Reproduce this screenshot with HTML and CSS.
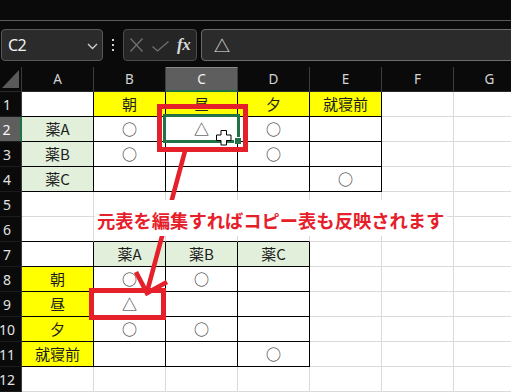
FILE: index.html
```html
<!DOCTYPE html>
<html lang="ja">
<head>
<meta charset="utf-8">
<link rel="stylesheet" href="styles.css">
</head>
<body>
<div class="app">
  <div class="topstrip"></div>
  <div class="fbar">
    <div class="namebox">
      <span class="ref">C2</span>
      <svg class="chev" width="11" height="7" viewBox="0 0 11 7"><path d="M1 1 L5.5 5.5 L10 1" fill="none" stroke="#d0d0d0" stroke-width="1.3"/></svg>
    </div>
    <div class="vdots"><i></i><i></i><i></i></div>
    <div class="fbtns">
      <svg class="ic-x" width="13" height="14" viewBox="0 0 13 14"><path d="M0.5 0.5 L12.5 13.5 M12.5 0.5 L0.5 13.5" stroke="#707070" stroke-width="1.3" fill="none"/></svg>
      <svg class="ic-ok" width="17" height="11" viewBox="0 0 17 11"><path d="M0.5 5.5 L5.5 10 L16.5 0.5" stroke="#707070" stroke-width="1.3" fill="none"/></svg>
      <span class="fx">fx</span>
    </div>
    <div class="finput"><span>△</span></div>
  </div>

  <div class="sheet">
    <div class="corner"><span class="tri"></span></div>
    <div class="ch">A</div><div class="ch">B</div><div class="ch sel">C</div><div class="ch">D</div><div class="ch">E</div><div class="ch">F</div><div class="ch">G</div>

    <div class="rh">1</div>
    <div class="c b"></div><div class="c b y">朝</div><div class="c b y">昼</div><div class="c b y">夕</div><div class="c b y">就寝前</div><div class="c"></div><div class="c"></div>

    <div class="rh sel">2</div>
    <div class="c b g">薬A</div><div class="c b sym">○</div><div class="c b sym">△</div><div class="c b sym">○</div><div class="c b"></div><div class="c"></div><div class="c"></div>

    <div class="rh">3</div>
    <div class="c b g">薬B</div><div class="c b sym">○</div><div class="c b"></div><div class="c b sym">○</div><div class="c b"></div><div class="c"></div><div class="c"></div>

    <div class="rh">4</div>
    <div class="c b g">薬C</div><div class="c b"></div><div class="c b"></div><div class="c b"></div><div class="c b sym">○</div><div class="c"></div><div class="c"></div>

    <div class="rh">5</div>
    <div class="c"></div><div class="c"></div><div class="c"></div><div class="c"></div><div class="c"></div><div class="c"></div><div class="c"></div>

    <div class="rh">6</div>
    <div class="c bb"></div><div class="c bb"></div><div class="c bb"></div><div class="c bb"></div><div class="c"></div><div class="c"></div><div class="c"></div>

    <div class="rh">7</div>
    <div class="c b"></div><div class="c b g">薬A</div><div class="c b g">薬B</div><div class="c b g">薬C</div><div class="c"></div><div class="c"></div><div class="c"></div>

    <div class="rh">8</div>
    <div class="c b y">朝</div><div class="c b sym">○</div><div class="c b sym">○</div><div class="c b"></div><div class="c"></div><div class="c"></div><div class="c"></div>

    <div class="rh">9</div>
    <div class="c b y">昼</div><div class="c b sym">△</div><div class="c b"></div><div class="c b"></div><div class="c"></div><div class="c"></div><div class="c"></div>

    <div class="rh">10</div>
    <div class="c b y">夕</div><div class="c b sym">○</div><div class="c b sym">○</div><div class="c b"></div><div class="c"></div><div class="c"></div><div class="c"></div>

    <div class="rh">11</div>
    <div class="c b y">就寝前</div><div class="c b"></div><div class="c b"></div><div class="c b sym">○</div><div class="c"></div><div class="c"></div><div class="c"></div>

    <div class="rh">12</div>
    <div class="c"></div><div class="c"></div><div class="c"></div><div class="c"></div><div class="c"></div><div class="c"></div><div class="c"></div>
  </div>

  <div class="selbox"><span class="handle"></span></div>
  <svg class="cursor" width="16" height="16" viewBox="0 0 16 16"><path d="M5 0.5 H10.5 V5 H15 V10.5 H10.5 V15 H5 V10.5 H0.5 V5 H5 Z" fill="#fff" stroke="#000" stroke-width="1"/></svg>

  <div class="redbox r1"></div>
  <div class="redbox r2"></div>
  <svg class="arrow" width="511" height="392" viewBox="0 0 511 392">
    <line x1="185" y1="151" x2="147" y2="292" stroke="#e6202b" stroke-width="4.6"/>
    <polyline points="136,272 147,293 167,282" fill="none" stroke="#e6202b" stroke-width="4.6" stroke-linejoin="miter"/>
  </svg>
  <div class="note">元表を編集すればコピー表も反映されます</div>
</div>
</body>
</html>
```

FILE: styles.css
```css
* { box-sizing: border-box; }
html, body { margin: 0; padding: 0; background: #0a0a0a; }
.app {
  position: relative;
  width: 511px;
  height: 392px;
  overflow: hidden;
  background: #0a0a0a;
  font-family: "Noto Sans CJK JP", "Noto Sans", sans-serif;
}
.topstrip {
  height: 21px;
  border-bottom: 1px solid #5c5c5c;
}
.fbar {
  display: flex;
  align-items: stretch;
  padding: 8px 0 6px 1px;
  height: 46px;
}
.namebox {
  width: 102px;
  height: 32px;
  background: #2b2b2b;
  border: 1px solid #585858;
  border-radius: 4px;
  display: flex;
  align-items: center;
  justify-content: space-between;
  padding: 0 4px 1px 6px;
}
.ref {
  font-family: "Noto Sans", sans-serif;
  font-size: 16px;
  color: #f2f2f2;
  letter-spacing: -0.5px;
}
.chev { margin-top: 3px; }
.vdots {
  width: 20px;
  display: flex;
  flex-direction: column;
  align-items: center;
  justify-content: center;
  gap: 3px;
}
.vdots i {
  display: block;
  width: 2px;
  height: 2px;
  background: #d0d0d0;
}
.fbtns {
  width: 74px;
  height: 32px;
  background: #252525;
  border: 1px solid #4c4c4c;
  border-radius: 4px;
  display: flex;
  align-items: center;
  padding-left: 6px;
}
.ic-x { margin-right: 9px; }
.ic-ok { margin-right: 8px; margin-top: 3px; }
.fx {
  font-family: "Liberation Serif", serif;
  font-style: italic;
  font-weight: bold;
  font-size: 17px;
  color: #d8d8d8;
  letter-spacing: -0.5px;
}
.finput {
  flex: 1;
  margin-left: 4px;
  margin-right: -10px;
  height: 32px;
  background: #2b2b2b;
  border: 1px solid #6c6c6c;
  border-radius: 4px;
  display: flex;
  align-items: center;
  padding-left: 12px;
  font-size: 16px;
  color: #e6e6e6;
}
.sheet {
  display: grid;
  grid-template-columns: 22px repeat(7, 72px);
  grid-auto-rows: 25px;
  width: 526px;
}
.corner {
  position: relative;
  background: #0a0a0a;
  border-right: 1px solid #3a3a3a;
  border-bottom: 1px solid #2a2a2a;
}
.tri {
  position: absolute;
  right: 2px;
  bottom: 3px;
  width: 0;
  height: 0;
  border-left: 17px solid transparent;
  border-bottom: 18px solid #5a5a5a;
}
.ch {
  background: #0a0a0a;
  border-right: 1px solid #3e3e3e;
  border-bottom: 1px solid #2a2a2a;
  color: #d4d4d4;
  font-family: "Noto Sans", sans-serif;
  font-size: 13.5px;
  display: flex;
  align-items: center;
  justify-content: center;
  padding-bottom: 1px;
}
.ch.sel {
  background: #5e5e5e;
  color: #f4f4f4;
  border-top: 1px solid #8a8a8a;
  border-bottom: 2px solid #217346;
}
.rh {
  background: #0a0a0a;
  border-right: 1px solid #3a3a3a;
  border-bottom: 1px solid #1c1c1c;
  color: #e2e2e2;
  font-family: "Noto Sans", sans-serif;
  font-size: 14px;
  display: flex;
  align-items: center;
  justify-content: center;
  padding-right: 7px;
}
.rh.sel {
  background: #5e5e5e;
  color: #fafafa;
  border-right: 2px solid #217346;
}
.c {
  background: #fff;
  border-right: 1px solid #dadada;
  border-bottom: 1px solid #dadada;
  display: flex;
  align-items: center;
  justify-content: center;
  font-size: 15px;
  color: #1e1e1e;
  padding-bottom: 1px;
}
.c.b { border-right-color: #000; border-bottom-color: #000; }
.c.bb { border-bottom-color: #000; }
.c.y { background: #ffff00; }
.c.g { background: #e2efda; }
.c.sym { color: #2a2a2a; }
.selbox {
  position: absolute;
  left: 163px;
  top: 114px;
  width: 77px;
  height: 29px;
  border: 3px solid #217346;
}
.handle {
  position: absolute;
  right: -4px;
  bottom: -4px;
  width: 7px;
  height: 7px;
  background: #217346;
  border-left: 1px solid #fff;
  border-top: 1px solid #fff;
}
.cursor {
  position: absolute;
  left: 216px;
  top: 130px;
}
.redbox {
  position: absolute;
  border: 5px solid #e6202b;
}
.r1 { left: 157px; top: 104px; width: 91px; height: 48px; }
.r2 { left: 89px; top: 288px; width: 77px; height: 32px; }
.arrow {
  position: absolute;
  left: 0;
  top: 0;
}
.note {
  position: absolute;
  left: 95px;
  top: 200px;
  width: 352px;
  height: 36px;
  background: #fff;
  color: #e6202b;
  font-weight: bold;
  font-size: 18.3px;
  line-height: 36px;
  padding-top: 2px;
  padding-left: 2px;
  white-space: nowrap;
}
```
